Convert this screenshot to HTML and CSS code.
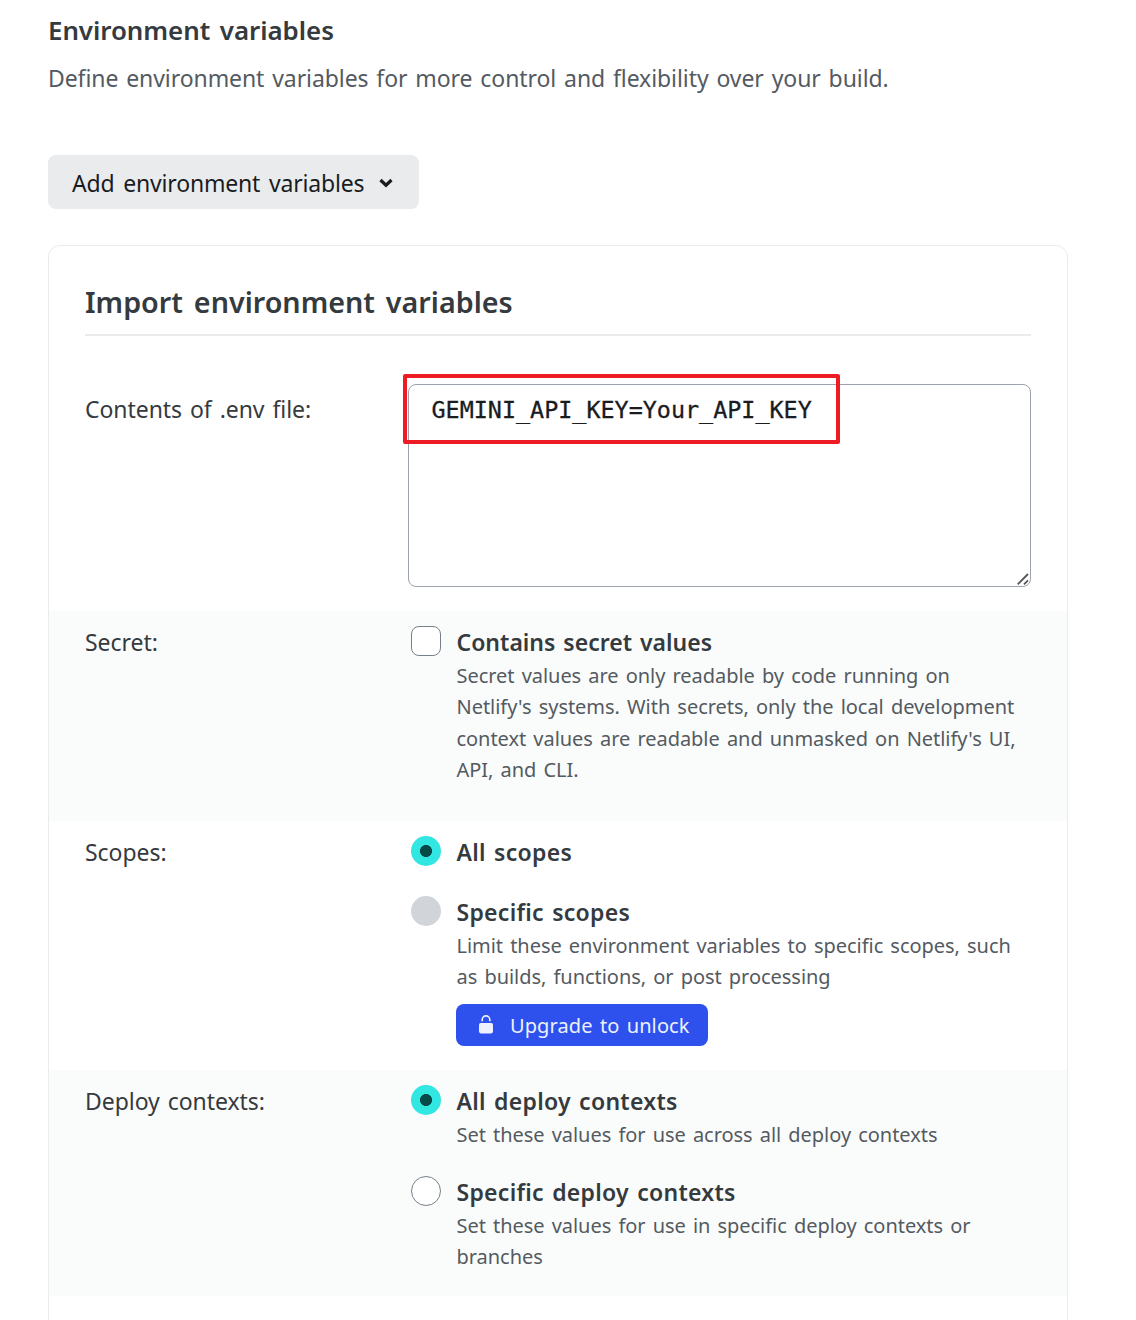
FILE: index.html
```html
<!DOCTYPE html>
<html lang="en">
<head>
<meta charset="utf-8">
<title>Environment variables</title>
<link rel="stylesheet" href="styles.css">
</head>
<body>
<main class="page">
  <h1 class="title">Environment variables</h1>
  <p class="lead">Define environment variables for more control and flexibility over your build.</p>
  <button class="add" type="button"><span>Add environment variables</span>
    <svg class="chevron" width="14" height="10" viewBox="0 0 14 10"><path d="M1.5 2 7 7.2 12.5 2" fill="none" stroke="currentColor" stroke-width="3.2"/></svg>
  </button>
  <section class="card">
    <h2 class="card-title">Import environment variables</h2>
    <div class="row row-env">
      <div class="label">Contents of .env file:</div>
      <div class="env">
        <div class="textarea">GEMINI_API_KEY=Your_API_KEY
          <svg class="grip" width="12" height="12" viewBox="0 0 12 12"><path d="M.7 11.3 11 1M7 11.3 11 7.3" fill="none" stroke="#555" stroke-width="1.8"/></svg>
        </div>
        <div class="highlight"></div>
      </div>
    </div>
    <div class="row row-secret tinted">
      <div class="label">Secret:</div>
      <div class="option">
        <span class="control checkbox"></span>
        <div><div class="name name-tight">Contains secret values</div>
        <p class="help">Secret values are only readable by code running on<br>Netlify's systems. With secrets, only the local development<br>context values are readable and unmasked on Netlify's UI,<br>API, and CLI.</p></div>
      </div>
    </div>
    <div class="row row-scopes">
      <div class="label">Scopes:</div>
      <div class="options">
        <div class="option first">
          <span class="control checked"></span>
          <div class="name">All scopes</div>
        </div>
        <div class="option">
          <span class="control disabled"></span>
          <div><div class="name">Specific scopes</div>
          <p class="help">Limit these environment variables to specific scopes, such<br>as builds, functions, or post processing</p>
          <button class="upgrade" type="button">
            <svg class="lock" width="14" height="19" viewBox="0 0 14 19"><path d="M3.2 6.3V4.7a3.8 3.8 0 0 1 7.6 0v1.6" fill="none" stroke="#edf1ff" stroke-width="1.6"/><rect y="8" width="14" height="10.4" rx="1.8" fill="#edf1ff"/></svg>
            <span>Upgrade to unlock</span>
          </button></div>
        </div>
      </div>
    </div>
    <div class="row row-contexts tinted">
      <div class="label">Deploy contexts:</div>
      <div class="options">
        <div class="option second">
          <span class="control checked"></span>
          <div><div class="name">All deploy contexts</div>
          <p class="help">Set these values for use across all deploy contexts</p></div>
        </div>
        <div class="option">
          <span class="control"></span>
          <div><div class="name">Specific deploy contexts</div>
          <p class="help">Set these values for use in specific deploy contexts or<br>branches</p></div>
        </div>
      </div>
    </div>
  </section>
</main>
</body>
</html>
```
FILE: styles.css
```css
* { box-sizing: border-box; }
html { overflow: hidden; }
body { margin: 0; background: #fff; color: #353a3e; font: 23px/36px "Noto Sans", "Open Sans", sans-serif; white-space: nowrap; }
h1, h2, p { margin: 0; }
button { font: inherit; border: 0; }
.page { height: 1320px; padding: 12px 68px 0 48px; overflow: hidden; }
.title { font-size: 25.9px; line-height: 36px; font-weight: 600; letter-spacing: -0.05px; word-spacing: 3px; }
.lead { margin-top: 12px; color: #545a61; letter-spacing: -0.08px; word-spacing: 2px; }
.add { display: flex; align-items: center; gap: 15px; width: 371px; height: 54px; margin-top: 59px; padding: 2px 24px 0; border-radius: 8px; background: #e9ebed; color: #1a1c1f; letter-spacing: -0.18px; word-spacing: 3px; }
.card { height: 1100px; margin-top: 36px; padding-top: 35px; border: 1px solid #e9ebed; border-radius: 12px; }
.card-title { height: 55px; margin: 0 36px; border-bottom: 2px solid #e9ebed; font-size: 28.7px; line-height: 42px; font-weight: 600; word-spacing: 3.5px; }
.row { display: grid; grid-template-columns: 326px 1fr; padding: 14px 36px 0; }
.label { margin-top: -1px; line-height: 36px; letter-spacing: -0.05px; word-spacing: 2px; }
.tinted { background: #fafcfb; }
.row-env { height: 275px; padding-top: 48px; }
.row-env .label { padding-top: 8px; }
.env { position: relative; margin-left: -3px; }
.textarea { position: relative; height: 203px; padding: 7px 22.5px; border: 1px solid #9ca3ad; border-radius: 8px; color: #1a1c1f; font: 23.4px/36px "DejaVu Sans Mono", monospace; -webkit-text-stroke: 0.3px #1a1c1f; }
.grip { position: absolute; right: 1px; bottom: 1px; }
.highlight { position: absolute; left: -5px; top: -10px; width: 437px; height: 70px; border: 4px solid #ed1c24; border-radius: 2px; }
.row-secret { height: 210px; }
.row-scopes { height: 249px; }
.row-contexts { height: 226px; }
.option { display: flex; gap: 15.5px; }
.first { height: 60px; }
.second { height: 91px; }
.control { flex: none; width: 30px; height: 30px; margin-top: 1px; border: 1px solid #778089; border-radius: 50%; background: #fff; }
.checkbox { border-radius: 8px; }
.checked { border: 0; background: radial-gradient(circle, #054a48 5.7px, #32e6e2 6.3px); }
.disabled { border: 0; background: #d1d5da; }
.name { height: 35.5px; margin-top: -1px; font-weight: 600; letter-spacing: 0.28px; word-spacing: 2px; }
.name-tight { letter-spacing: 0; }
.help { color: #545a61; font-size: 20px; line-height: 31.5px; letter-spacing: -0.04px; word-spacing: 2px; }
.upgrade { display: flex; align-items: center; gap: 17px; width: 252px; height: 42px; margin: 11.5px 0 0 -0.5px; padding: 2px 0 0 23px; border-radius: 8px; background: #2e51ed; color: #edf1ff; font-size: 20px; letter-spacing: 0.1px; word-spacing: 2px; }
.lock { flex: none; margin-top: -4px; }
```
